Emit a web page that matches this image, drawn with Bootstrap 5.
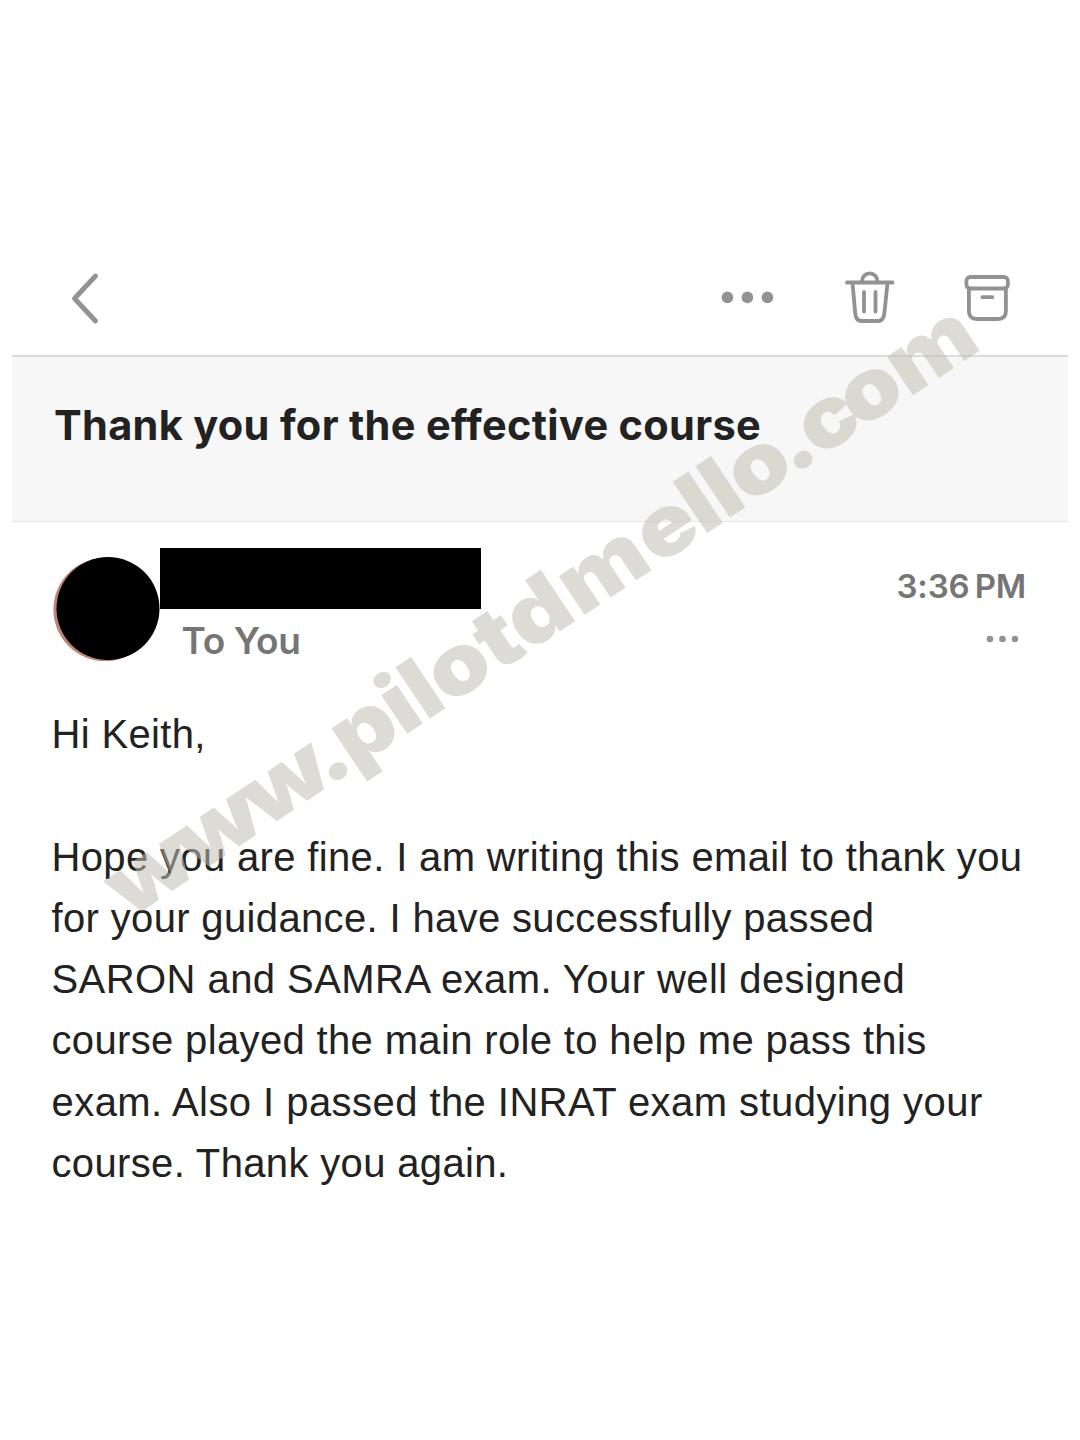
<!DOCTYPE html>
<html lang="en">
<head>
<meta charset="utf-8">
<meta name="viewport" content="width=device-width, initial-scale=1">
<title>Thank you for the effective course</title>
<link href="https://cdn.jsdelivr.net/npm/bootstrap@5.3.0/dist/css/bootstrap.min.css" rel="stylesheet">
<style>
  body { background: #fff; color: #222; font-family: Inter, "Liberation Sans", sans-serif; }
  .mail-page { width: 1080px; height: 1440px; padding: 240px 12px 0; }
  .mail-toolbar { height: 115px; padding: 0 57px 0 56px; }
  .mail-toolbar svg, .mail-meta svg { display: block; fill: none; stroke: #929292; stroke-width: 3.8; stroke-linecap: round; stroke-linejoin: round; }
  .mail-toolbar .dots, .mail-meta .dots { fill: #929292; stroke: none; }
  .tools { gap: 68.5px; }
  .mail-subject { height: 167px; padding: 41px 42px 0; background: #f7f7f7; border-top: 2px solid #dcdcdc; border-bottom: 1.5px solid #e6e6e6; }
  .mail-subject h1 { font-size: 41.5px; line-height: 54px; font-weight: 700; letter-spacing: .32px; white-space: nowrap; font-variant-ligatures: none; }
  .mail-sender { height: 155px; padding: 26px 42px 0 41px; }
  .avatar { width: 107px; height: 105px; margin-top: 8.5px; display: block; }
  .sender-name { width: 321px; height: 60.5px; background: #000; }
  .sender-to { margin-left: 21.5px; font-size: 37px; line-height: 64px; font-weight: 600; letter-spacing: -.4px; color: #757575; }
  .mail-meta { color: #757575; font-size: 33px; line-height: 44px; font-weight: 600; margin-top: 15.5px; letter-spacing: -.2px; }
  .mail-meta .dots { margin: 25.5px 1px 0 0; }
  .mail-body { padding: 27px 20px 0 39.5px; font: 40px/61.25px "Liberation Sans", Arial, sans-serif; letter-spacing: .35px; white-space: nowrap; }
  .mail-body p { margin: 0 0 61.25px; }
  .mail-body span { display: block; }
  .mail-body .wider { letter-spacing: .44px; }
  .watermark { width: 1080px; height: 1440px; pointer-events: none; opacity: .54; }
  .watermark text { font: 900 85px Inter, sans-serif; fill: #c0beb2; text-anchor: middle; }
</style>
<script src="https://cdn.jsdelivr.net/npm/bootstrap@5.3.0/dist/js/bootstrap.bundle.min.js"></script>
</head>
<body>
<main class="mail-page position-relative overflow-hidden">
  <header class="mail-toolbar d-flex align-items-center justify-content-between">
    <svg width="34" height="56" viewBox="0 0 34 56"><path d="M27.5 6 6.5 28.5 27.5 51" stroke-width="4.8"/></svg>
    <div class="tools d-flex align-items-center">
      <svg class="dots" width="56" height="14" viewBox="0 0 56 14"><circle cx="9.4" cy="6.4" r="5.8"/><circle cx="29.4" cy="6.4" r="5.8"/><circle cx="49.4" cy="6.4" r="5.8"/></svg>
      <svg width="52" height="54" viewBox="0 0 52 54"><path d="M4 11.5H49.5M19 11v-1a7.7 7.7 0 0 1 15.4 0v1M9.5 12l2.8 31Q13 50 19 50H34.5Q40.5 50 41.3 43L44.5 12M21 21v19.5M32.5 21v19.5"/></svg>
      <svg width="48" height="48" viewBox="0 0 48 48"><rect x="3.4" y="3" width="41.5" height="11.5" rx="4"/><path d="M5.9 15V37q0 8 8 8h21q8 0 8-8V15M19.4 23.2H29.4"/></svg>
    </div>
  </header>
  <section class="mail-subject"><h1 class="m-0"><span>Thank you for the effective course</span></h1></section>
  <section class="mail-sender d-flex align-items-start">
    <svg class="avatar" viewBox="0 0 107 105"><circle cx="52" cy="52.5" r="51.6" fill="#bd8577"/><circle cx="55" cy="51.5" r="51.5" fill="#000"/></svg>
    <div>
      <div class="sender-name"></div>
      <div class="sender-to">To You</div>
    </div>
    <div class="mail-meta ms-auto d-flex flex-column align-items-end">
      <span>3:36&#8201;PM</span>
      <svg class="dots" width="40" height="12" viewBox="0 0 40 12"><circle cx="5" cy="6" r="3.3"/><circle cx="17.5" cy="6" r="3.3"/><circle cx="30" cy="6" r="3.3"/></svg>
    </div>
  </section>
  <article class="mail-body">
    <p>Hi Keith,</p>
    <p>
      <span>Hope you are fine. I am writing this email to thank you</span>
      <span>for your guidance. I have successfully passed</span>
      <span class="wider">SARON and SAMRA exam. Your well designed</span>
      <span>course played the main role to help me pass this</span>
      <span class="wider">exam. Also I passed the INRAT exam studying your</span>
      <span>course. Thank you again.</span>
    </p>
  </article>
  <svg class="watermark position-absolute top-0 start-0" viewBox="0 0 1080 1440">
    <g transform="translate(128.6 920.3) rotate(-33.8)">
      <text transform="scale(1.18 1)" x="37.6 106 175.4" y="0">www</text>
      <text transform="scale(1.12 1)" x="229.6 269.2 307.6 332.1 370.3 413.4 456.7 525.9 593.4 629.9 654.5 692.4 729.2 767 812.5 878.5" y="0">.pilotdmello.com</text>
    </g>
  </svg>
</main>
</body>
</html>
